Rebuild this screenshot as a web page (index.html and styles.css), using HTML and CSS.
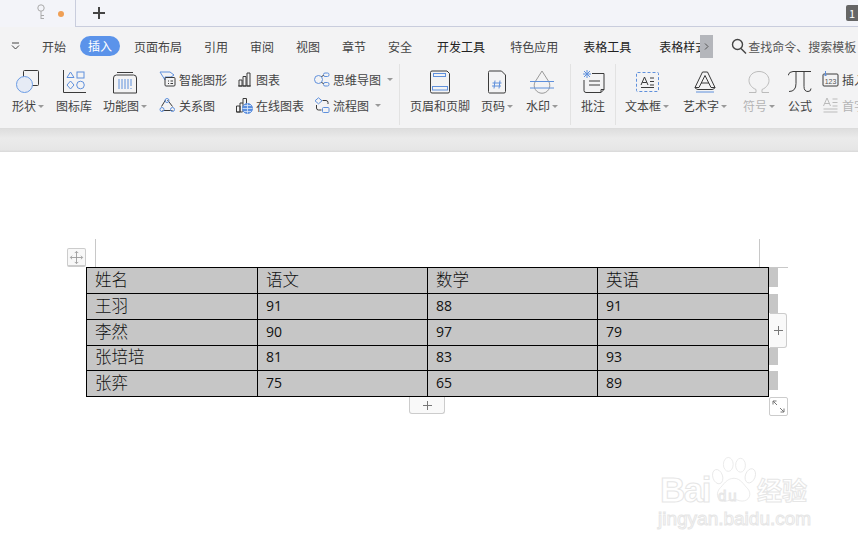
FILE: index.html
```html
<!DOCTYPE html>
<html lang="zh">
<head>
<meta charset="utf-8">
<title>WPS 文字</title>
<link rel="stylesheet" href="styles.css">
</head>
<body>
<div class="app">
  <div class="tabbar">
    <div class="tab">
      <svg class="key" width="12" height="20" viewBox="0 0 12 20"><circle cx="6" cy="5" r="3.2"/><path d="M6 8.2V16M6 12.5h3M6 15.5h3"/></svg>
      <span class="dot"></span>
    </div>
    <svg class="plus" width="12" height="12" viewBox="0 0 12 12"><path d="M6 0v12M0 6h12"/></svg>
    <div class="spacer"></div>
    <div class="badge">1</div>
  </div>

  <div class="menubar">
    <svg class="chev" width="9" height="8" viewBox="0 0 9 8"><path d="M1 1h7M1 3.5l3.500 3.500 3.500-3.500"/></svg>
    <span class="m">开始</span>
    <span class="m pill">插入</span>
    <span class="m">页面布局</span>
    <span class="m wide">引用</span>
    <span class="m wide">审阅</span>
    <span class="m wide">视图</span>
    <span class="m wide">章节</span>
    <span class="m wide">安全</span>
    <span class="m wide dark">开发工具</span>
    <span class="m wider">特色应用</span>
    <span class="m wide dark">表格工具</span>
    <span class="m clip dark">表格样式</span>
    <span class="scroll"><svg width="5" height="7" viewBox="0 0 5 7"><path d="M1 .5l3 3-3 3"/></svg></span>
    <svg class="search" width="16" height="17" viewBox="0 0 16 17"><circle cx="6.500" cy="6.500" r="5"/><path d="M10 10.500l5 5"/></svg>
    <span class="hint">查找命令、搜索模板</span>
  </div>

  <div class="ribbon">
    <div class="big w44">
      <svg class="ico" width="26" height="26" viewBox="0 0 26 26"><rect class="k" x="8.500" y="1.500" width="15" height="15" rx="1"/><circle class="bf" cx="9.500" cy="15.500" r="8"/></svg>
      <div class="lab">形状<i class="car"></i></div>
    </div>
    <div class="big w48">
      <svg class="ico" width="24" height="24" viewBox="0 0 24 24"><path class="k" d="M1.500 0v22.500H24"/><path class="b" d="M8.500 2l3.500 5.500H5zM8.500 11l3.500 4-3.500 4L5 15z"/><rect class="b" x="15" y="2" width="7" height="6"/><circle class="b" cx="18.500" cy="15" r="3.800"/></svg>
      <div class="lab">图标库</div>
    </div>
    <div class="big w54">
      <svg class="ico" width="24" height="24" viewBox="0 0 24 24"><path class="k" d="M.5 23V8q0-3 3-3h17q3 0 3 3v15zM4 2.500h16"/><path class="b" d="M6 9v10M9 9v10M12 9v10M15 9v10M18 9v7M18 18v1"/></svg>
      <div class="lab">功能图<i class="car"></i></div>
    </div>

    <div class="col c1">
      <div class="row"><svg class="sm" width="17" height="16" viewBox="0 0 17 16"><path class="b" d="M1 1h10l4 3-3 2H6v3z"/><rect class="k" x="6" y="6.500" width="10" height="8.500" rx="1"/><path class="k" d="M9 10h1M9 12.500h1M11.500 10h2.500M11.500 12.500h2.500"/></svg><span>智能图形</span></div>
      <div class="row"><svg class="sm" width="16" height="15" viewBox="0 0 16 15"><path class="k" d="M8 2l5 6.500M6 2L2 8.500M3 12.500h10"/><circle class="b" cx="7.500" cy="2.500" r="2"/><circle class="b" cx="2.500" cy="11.500" r="2"/><circle class="b" cx="13" cy="11.500" r="2"/></svg><span>关系图</span></div>
    </div>
    <div class="col c2">
      <div class="row"><svg class="sm" width="14" height="15" viewBox="0 0 14 15"><path class="k" d="M1.500 14V8h3v6zM5.500 14V4.500h3V14zM9.500 14V1h3v13zM.5 14h13"/></svg><span>图表</span></div>
      <div class="row"><svg class="sm" width="17" height="17" viewBox="0 0 17 17"><path class="k" d="M.5 15V9h3.500v6zM4 15V6h3v9M7 6V1.500h3.500V7M.5 15h6"/><circle class="bfill" cx="11.500" cy="11.500" r="5"/><path class="w" d="M6.500 11.500h10M11.500 6.500v10M8 8.500h7M8 14.500h7"/></svg><span>在线图表</span></div>
    </div>
    <div class="col c3">
      <div class="row"><svg class="sm" width="16" height="15" viewBox="0 0 16 15"><circle class="b" cx="5" cy="7.500" r="4"/><rect class="b" x="10" y="1" width="5.500" height="3.500" rx="1.500"/><rect class="b" x="10" y="10.500" width="5.500" height="3.500" rx="1.500"/><path class="k" d="M8 5l2-2M8 10l2 2"/></svg><span>思维导图</span><i class="car"></i></div>
      <div class="row"><svg class="sm" width="16" height="16" viewBox="0 0 16 16"><path class="b" d="M5 .8l3.500 3L5 6.800 1.500 3.800z"/><rect class="b" x="9" y="10.500" width="6.500" height="5" rx="1"/><path class="k" d="M9 3.500h3.500q2 0 2 2v1.500M3 8v3q0 2 2 2h3"/></svg><span>流程图</span><i class="car"></i></div>
    </div>
    <div class="sep"></div>

    <div class="big w80">
      <svg class="ico" width="20" height="23" viewBox="0 0 20 23"><path class="k" d="M2 .5h15l2.500 2.500v18q0 1.500-1.500 1.500H2q-1.500 0-1.500-1.500V2Q.5.5 2 .5z"/><rect class="b" x="3.500" y="3" width="12" height="3"/><rect class="b" x="2.500" y="16" width="15" height="3.500"/></svg>
      <div class="lab">页眉和页脚</div>
    </div>
    <div class="big w34">
      <svg class="ico" width="18" height="23" viewBox="0 0 18 23"><path class="k" d="M1.500.5h12l4 4V21q0 1.500-1.500 1.500H1.500Q.5 22.500.5 21V2Q.5.5 1.500.5z"/><path class="b" d="M7 10l-1 8M12 10l-1 8M4.500 12.500h9M4 15.500h9"/></svg>
      <div class="lab">页码<i class="car"></i></div>
    </div>
    <div class="big w56">
      <svg class="ico" width="24" height="24" viewBox="0 0 24 24"><path class="g" d="M12 1l7 11a7.800 7.800 0 1 1-14 0z"/><path class="b" d="M0 11.500h24M0 18h24"/></svg>
      <div class="lab">水印<i class="car"></i></div>
    </div>
    <div class="sep"></div>

    <div class="big w44">
      <svg class="ico" width="23" height="24" viewBox="0 0 23 24"><path class="b" d="M5 0v8M1 4h8M2 1l6 6M8 1L2 7"/><path class="k" d="M10 3.500h12v16l-3 3H4q-2 0-2-2V10M7 11h11M7 15h11M19 22.500v-3h3"/></svg>
      <div class="lab">批注</div>
    </div>
    <div class="sep"></div>

    <div class="big w62">
      <svg class="ico" width="23" height="20" viewBox="0 0 23 20"><rect class="bd" x=".5" y=".5" width="22" height="19" rx="1"/><path class="k" d="M5 13L8.500 5l3.500 8M6.300 10.500h4.500M14 6h4M14 9.500h4M14 13h4M5 15.500h13"/></svg>
      <div class="lab">文本框<i class="car"></i></div>
    </div>
    <div class="big w54">
      <svg class="ico" width="22" height="23" viewBox="0 0 22 23"><path class="k" d="M1 17L8.500 1.500h5L21 17h-4l-6-12-6 12zM7 12.500h8"/><path class="k" d="M1 17q1 2 3 2h14q2 0 3-2"/><path class="b" d="M2 21.500h18"/></svg>
      <div class="lab">艺术字<i class="car"></i></div>
    </div>
    <div class="big w54 off">
      <svg class="ico" width="22" height="23" viewBox="0 0 22 23"><path class="l" d="M1 22h7v-3C3 17 1 13 1 10 1 5 5 1 11 1s10 4 10 9c0 3-2 7-7 9v3h7"/></svg>
      <div class="lab">符号<i class="car"></i></div>
    </div>
    <div class="big w28">
      <svg class="ico" width="24" height="23" viewBox="0 0 24 23"><path class="k" d="M0 5Q1 1 5 1h18M8 1v12q0 8-7 8M16 1v15q0 5 4 5 3 0 3-3"/></svg>
      <div class="lab">公式</div>
    </div>
    <div class="col c4">
      <div class="row"><svg class="sm" width="16" height="16" viewBox="0 0 16 16"><rect class="k" x=".5" y="3" width="15" height="12" rx="1"/><path class="b" d="M3 0v5M1.500 3.500L3 5l1.500-1.500"/><text class="num" x="8" y="12.500">123</text></svg><span>插入</span></div>
      <div class="row off"><svg class="sm" width="16" height="16" viewBox="0 0 16 16"><path class="l" d="M1 9l3.500-8L8 9M2 6.500h5M10 2h5M10 5.500h5M10 9h5M1 12h14M1 15h14"/></svg><span>首字</span></div>
    </div>
  </div>

  <div class="band"></div>

  <div class="doc">
    <div class="sheet">
      <table class="grid">
        <tr><td>姓名</td><td>语文</td><td>数学</td><td>英语</td></tr>
        <tr><td>王羽</td><td class="n">91</td><td class="n">88</td><td class="n">91</td></tr>
        <tr><td>李然</td><td class="n">90</td><td class="n">97</td><td class="n">79</td></tr>
        <tr class="short"><td>张培培</td><td class="n">81</td><td class="n">83</td><td class="n">93</td></tr>
        <tr><td>张弈</td><td class="n">75</td><td class="n">65</td><td class="n">89</td></tr>
      </table>

      <span class="guide gl"></span>
      <span class="guide gr"></span>
      <span class="guide gh"></span>
      <span class="stub s1"></span>
      <span class="stub s2"></span>
      <span class="stub s3"></span>
      <span class="stub s4"></span>

      <span class="ctl move"><svg width="17" height="17" viewBox="0 0 17 17"><path d="M8.500 2v13M2 8.500h13M6.500 3.500l2-2 2 2M6.500 13.500l2 2 2-2M3.500 6.500l-2 2 2 2M13.500 6.500l2 2-2 2"/></svg></span>
      <span class="ctl addcol"><svg width="11" height="11" viewBox="0 0 11 11"><path d="M5.500 1v9M1 5.500h9"/></svg></span>
      <span class="ctl addrow"><svg width="11" height="11" viewBox="0 0 11 11"><path d="M5.500 1v9M1 5.500h9"/></svg></span>
      <span class="ctl resize"><svg width="15" height="15" viewBox="0 0 15 15"><path d="M2 2l4 4M2 2h3.500M2 2v3.500M13 13L9 9M13 13H9.500M13 13V9.500"/></svg></span>
    </div>

    <div class="mark">
      <span class="bai">Bai</span>
      <svg class="paw" width="44" height="49" viewBox="0 0 54 55"><ellipse cx="7" cy="24" rx="6" ry="9" transform="rotate(-18 7 24)"/><ellipse cx="20" cy="9" rx="6" ry="8.500"/><ellipse cx="35" cy="10" rx="6" ry="8.500"/><ellipse cx="47" cy="23" rx="6" ry="9" transform="rotate(20 47 23)"/><path d="M27 26c8 0 12 8 17 13 5 6 2 15-7 15-4 0-6-2-10-2s-7 2-11 2c-9 0-12-8-7-15 5-5 9-13 18-13z"/></svg>
      <span class="du">du</span>
      <span class="jy">经验</span>
      <span class="url">jingyan.baidu.com</span>
    </div>
  </div>
</div>
</body>
</html>
```

FILE: styles.css
```css
* { box-sizing: border-box; }
html, body { margin: 0; height: 100%; overflow: hidden; background: #fff; }
body { font-family: "Noto Sans CJK SC", "Noto Sans", sans-serif; font-size: 12px; color: #444; }
.app { width: 858px; height: 547px; display: flex; flex-direction: column; overflow: hidden; }

svg { display: block; flex: none; fill: none; stroke-width: 1; }

/* tab bar */
.tabbar { height: 27px; display: flex; align-items: center; background: #f3f4f9; border-bottom: 1px solid #c9cddd; position: relative; }
.tab { width: 76px; height: 27px; border-right: 1px solid #c9cddd; background: #f3f4f9; margin-bottom: -1px; position: relative; display: flex; align-items: center; padding-left: 35px; gap: 11px; flex: none; }
.key { stroke: #aaa; margin-top: -1px; }
.dot { width: 6px; height: 6px; border-radius: 50%; background: #ef9f55; }
.plus { margin-left: 17px; stroke: #444; stroke-width: 2; }
.spacer { flex: 1; }
.badge { width: 12px; height: 16px; margin-top: -1px; background: #666; color: #fff; border-radius: 2px 0 0 2px; font-size: 11px; line-height: 16px; text-align: center; }

/* menu */
.menubar { height: 33px; padding: 5px 0 0 11px; display: flex; align-items: center; background: #f3f3f4; white-space: nowrap; color: #444; }
.chev { stroke: #444; margin-right: 22px; }
.m { flex: none; }
.m + .m { margin-left: 14px; }
.m.wide { margin-left: 22px; }
.m.dark { color: #222; }
.pill { width: 40px; height: 20px; line-height: 20px; text-align: center; border-radius: 10px; background: #5b93ea; color: #fff; }
.m.wide.dark, .m.wider { margin-left: 25px; }
.clip { width: 41px; overflow: hidden; margin-left: 28px !important; }
.scroll { width: 13px; height: 23px; background: #b4b6bb; display: flex; align-items: center; justify-content: center; flex: none; }
.scroll svg { stroke: #555; }
.search { stroke: #444; stroke-width: 1.400; margin-left: 18px; }
.hint { margin-left: 1px; color: #555; }

/* ribbon */
.ribbon { height: 69px; display: flex; background: #f3f3f4; border-bottom: 1px solid #dcdcdc; padding-left: 6px; white-space: nowrap; overflow: hidden; }
.big { flex: none; display: flex; flex-direction: column; align-items: center; padding-top: 9px; }
.big svg.ico { height: 26px; }
.lab { line-height: 18px; display: flex; align-items: center; margin-top: 2px; }
.w28 { width: 28px; } .w34 { width: 34px; } .w44 { width: 44px; } .w48 { width: 48px; }
.w54 { width: 54px; } .w56 { width: 56px; } .w62 { width: 62px; } .w80 { width: 80px; }
.car { width: 0; height: 0; margin-left: 2px; border: 3px solid transparent; border-top: 3px solid #999; border-bottom: 0; }
.col { flex: none; padding-top: 6px; }
.c1 { width: 78px; padding-left: 7px; }
.c2 { width: 83px; padding-left: 6px; }
.c3 { width: 86px; }
.c4 { width: 44px; padding-left: 8px; }
.row { height: 26px; display: flex; align-items: center; gap: 3px; }
.row .sm { width: 17px; }
.row .car { margin-left: 3px; }
.sep { width: 1px; flex: none; height: 61px; margin-top: 4px; background: #e2e2e2; }
.off { color: #b4b4b4; }
.k { stroke: #3a3a3a; }
.b { stroke: #5f90dc; }
.bd { stroke: #5f90dc; stroke-dasharray: 3 2; }
.g { stroke: #999; }
.l { stroke: #bbb; }
.bf { stroke: #6a9be4; fill: #e6ebf5; }
.bfill { fill: #5b8fdf; stroke: #5b8fdf; }
.w { stroke: #dce7f8; stroke-width: .8; }
.num { font: 7px "Liberation Sans", sans-serif; fill: #555; stroke: none; text-anchor: middle; }

.band { height: 23px; flex: none; background: linear-gradient(#dedede, #ebebeb 40%, #e6e6e6 90%, #d8d8d8); }

/* document */
.doc { flex: 1; background: #fff; position: relative; padding: 115px 0 0 86px; }
.sheet { position: relative; width: 683px; height: 130px; }
.grid { border-collapse: collapse; table-layout: fixed; width: 682px; height: 130px; background: #c6c6c6; color: #111; }
.grid td { border: 1px solid #000; padding: 0 0 4px 8px; height: 26px; width: 170px; font-size: 16.500px; line-height: 20px; font-weight: 300; }
.grid td:first-child { width: 171px; }
.grid td:last-child { width: 171px; }
.grid td.n { font-family: "Open Sans", sans-serif; font-size: 14px; font-weight: 400; padding-top: 0; padding-bottom: 2px; }
.grid .short td { height: 25px; }

.guide { position: absolute; background: #c8c8c8; }
.gl { left: 9px; top: -28px; width: 1px; height: 28px; }
.gr { left: 673px; top: -28px; width: 1px; height: 28px; }
.gh { left: 683px; top: 0; width: 19px; height: 1px; }
.stub { position: absolute; left: 683px; width: 9px; background: #c6c6c6; }
.s1 { top: 1px; height: 19px; }
.s2 { top: 27px; height: 19px; }
.s3 { top: 81px; height: 17px; }
.s4 { top: 104px; height: 19px; }

.ctl { position: absolute; display: flex; align-items: center; justify-content: center; background: #fff; border: 1px solid #ccc; }
.ctl svg { stroke: #777; }
.move { left: -19px; top: -19px; width: 19px; height: 19px; border-radius: 2px; background: #f8f8f8; border-bottom-width: 2px; }
.move svg { stroke: #999; width: 15px; height: 15px; }
.addcol { left: 684px; top: 46px; width: 17px; height: 35px; background: #f9f9f9; border-radius: 0 3px 3px 0; border-left: 0; }
.addrow { left: 323px; top: 130px; width: 36px; height: 17px; background: #f9f9f9; border-radius: 0 0 3px 3px; border-top: 0; }
.resize { left: 683px; top: 130px; width: 19px; height: 19px; border-radius: 2px; }

/* watermark */
.mark { position: absolute; left: 656px; top: 301px; width: 170px; height: 90px; color: #fff; -webkit-text-stroke: 1px #e6e6e6; font-family: "Liberation Sans", sans-serif; }
.mark span { position: absolute; line-height: 1; }
.bai { left: 4px; top: 19px; font-size: 35px; font-weight: 700; letter-spacing: -1.500px; }
.paw { position: absolute; left: 56px; top: 2px; stroke: #e6e6e6; fill: #fff; }
.du { left: 62px; top: 35px; font-size: 15px; letter-spacing: 2px; }
.jy { left: 101px; top: 24px; font-size: 25px; font-family: "Noto Sans CJK SC", sans-serif; font-weight: 700; }
.url { left: 2px; top: 56px; font-size: 19px; }
```
